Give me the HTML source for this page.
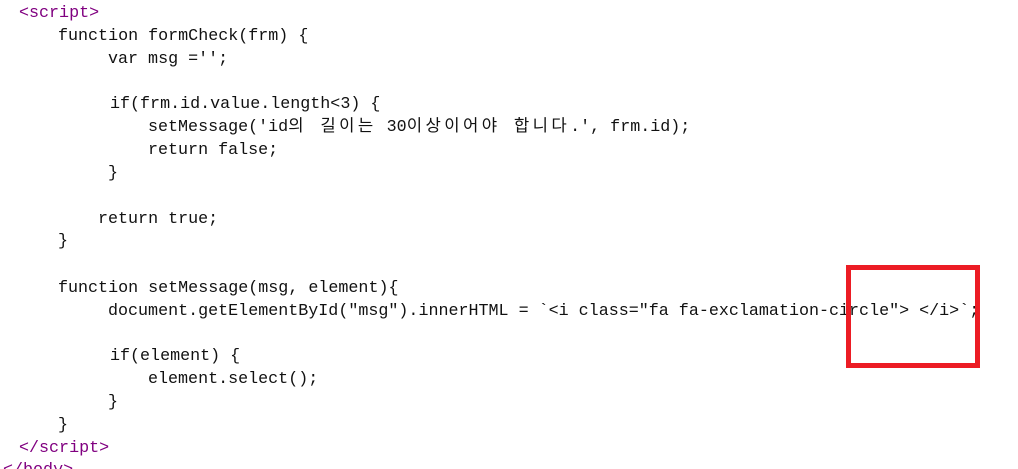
<!DOCTYPE html>
<html><head><meta charset="utf-8"><style>
html,body{margin:0;padding:0;background:#fff;width:1018px;height:469px;overflow:hidden;position:relative}
.l{position:absolute;white-space:pre;font-family:"Liberation Mono","Noto Sans CJK KR",monospace;font-size:16.7px;line-height:22px;color:#111}
.p{color:#800080}
.k{letter-spacing:3.4px}
.box{position:absolute;left:846px;top:265px;width:124px;height:93px;border:5px solid #ec1c24}
</style></head><body>
<div class="l p" style="left:19px;top:3px">&lt;script&gt;</div>
<div class="l" style="left:58px;top:26px">function formCheck(frm) {</div>
<div class="l" style="left:108px;top:49px">var msg ='';</div>
<div class="l" style="left:110px;top:94px">if(frm.id.value.length&lt;3) {</div>
<div class="l" style="left:148px;top:117px">setMessage('id<span class="k">의 길이는</span> 30<span class="k">이상이어야 합니다</span>.', frm.id);</div>
<div class="l" style="left:148px;top:140px">return false;</div>
<div class="l" style="left:108px;top:163px">}</div>
<div class="l" style="left:98px;top:209px">return true;</div>
<div class="l" style="left:58px;top:231px">}</div>
<div class="l" style="left:58px;top:278px">function setMessage(msg, element){</div>
<div class="l" style="left:108px;top:301px">document.getElementById("msg").innerHTML = `&lt;i class="fa fa-exclamation-circle"&gt; &lt;/i&gt;`;</div>
<div class="l" style="left:110px;top:346px">if(element) {</div>
<div class="l" style="left:148px;top:369px">element.select();</div>
<div class="l" style="left:108px;top:392px">}</div>
<div class="l" style="left:58px;top:415px">}</div>
<div class="l p" style="left:19px;top:438px">&lt;/script&gt;</div>
<div class="l p" style="left:3px;top:460px">&lt;/body&gt;</div>
<div class="box"></div>
</body></html>
